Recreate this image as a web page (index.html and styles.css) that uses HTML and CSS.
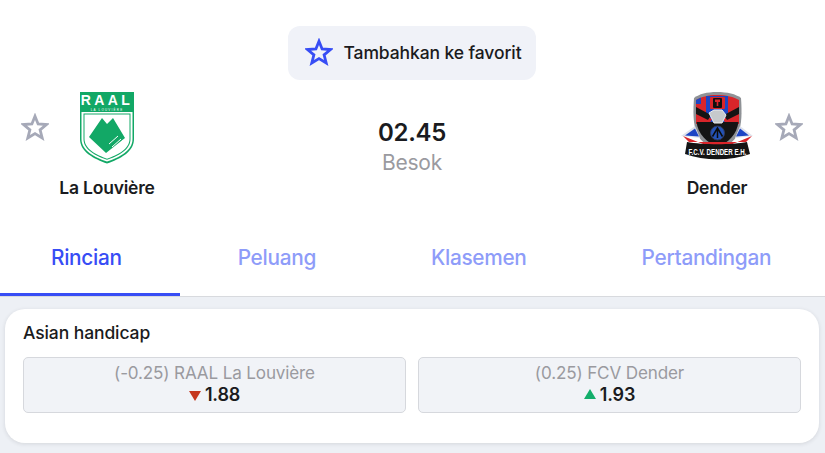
FILE: index.html
```html
<!DOCTYPE html>
<html lang="id">
<head>
<meta charset="utf-8">
<title>La Louvière - Dender</title>
<link rel="stylesheet" href="styles.css">
</head>
<body>
<svg class="defs" width="0" height="0" aria-hidden="true">
  <symbol id="star" viewBox="0 0 28 28">
    <path d="M14 3.200 17.100 10.900 25.600 11.500 19.100 16.800 21.200 25 14 20.600 6.800 25 8.900 16.800 2.400 11.500 10.900 10.900Z" fill="none" stroke="currentColor" stroke-width="2.800" stroke-linejoin="miter"/>
  </symbol>
</svg>
<header class="head">
  <button class="fav"><svg class="fav-star"><use href="#star"/></svg><span>Tambahkan ke favorit</span></button>
  <div class="match">
    <div class="team">
      <svg class="star"><use href="#star"/></svg>
      <div class="club">
        <svg class="crest" viewBox="0 0 54 72" width="54" height="72">
          <path d="M0 0H54V47C54 60 40 67 27 71.500 14 67 0 60 0 47Z" fill="#12a866"/>
          <path d="M1.500 20H52.500V47C52.500 59 39 65.500 27 69.500 15 65.500 1.500 59 1.500 47Z" fill="#fff"/>
          <path d="M3.500 21.500H50.500V47C50.500 58 38 64 27 67.800 16 64 3.500 58 3.500 47Z" fill="#12a866"/>
          <path d="M4.500 22.500H49.500V47C49.500 57 37.500 63 27 66.700 16.500 63 4.500 57 4.500 47Z" fill="#fff"/>
          <path d="M9 45 22 26 27 32 33 26 45 46 26 61Z" fill="#12a866"/>
          <path d="M29 52 38 44M32 55 41 47M35 56 43 48" stroke="#fff" stroke-width="1" fill="none"/>
          <text class="raal" x="27" y="12.800" text-anchor="middle">RAAL</text>
          <text class="raal-sub" x="27" y="18.600" text-anchor="middle">LA LOUVIÈRE</text>
        </svg>
        <span class="name">La Louvière</span>
      </div>
    </div>
    <div class="time">
      <strong>02.45</strong>
      <span>Besok</span>
    </div>
    <div class="team team-away">
      <div class="club">
        <svg class="crest" viewBox="0 0 72 72" width="72" height="72">
          <path d="M36 0C46 0 55 2 60 6 61 20 61 32 57 42 53 50 45 55 37 58 28 55 20 50 16 42 12 32 12 20 13 6 18 2 26 0 36 0Z" fill="#8f9296"/>
          <path d="M36 3C45 3 53 5 58 8V26H15V8C20 5 27 3 36 3Z" fill="#d9252a"/>
          <path d="M25 4H47V32H25Z" fill="#1d45c4"/>
          <path d="M15 8 20 5.500V12H15Z" fill="#1d45c4"/>
          <path d="M15 19 31 27 28 32H15ZM58 19 42 27 45 32H58Z" fill="#d9252a"/>
          <path d="M15 15 30 23 27 28 15 22ZM58 15 43 23 46 28 58 22Z" fill="#141414"/>
          <path d="M15.500 30H57.500C56 42 47 51 37 55 26 51 17 42 15.500 30Z" fill="#141414"/>
          <path d="M28 21 33 18H41L45 23 41 31H33Z" fill="#c6c9cc" stroke="#eceef0"/>
          <circle cx="36.500" cy="41" r="7" fill="#2453b8" stroke="#30395c"/>
          <path d="M31.500 44.500 36.500 36 41.500 44.500M36.500 37V46" stroke="#0b0b0b" stroke-width="1.500" fill="none"/>
          <rect x="29" y="5" width="15" height="12" rx="1" fill="#d9252a"/>
          <rect x="32" y="6" width="9" height="10" rx="1" fill="#111"/>
          <path d="M34 7.500H39V10H37.300V14H35.700V10H34Z" fill="#d9252a"/>
          <path d="M14 34 0 44 19 46Z" fill="#dfe3ec"/>
          <path d="M14 36.500 4 43.500 18 44.500Z" fill="#1d45c4"/>
          <path d="M59 34 72 44 54 46Z" fill="#dfe3ec"/>
          <path d="M59 36.500 68 43.500 55 44.500Z" fill="#1d45c4"/>
          <path d="M2 44 37 58 71 44 65 50H8Z" fill="#d9252a"/>
          <path d="M6 50C22 53 51 53 66 50L69 62C50 69 23 69 4 62Z" fill="#141414"/>
          <text class="fcv" x="36.500" y="62.500" text-anchor="middle" textLength="58" lengthAdjust="spacingAndGlyphs">F.C.V. DENDER E.H.</text>
        </svg>
        <span class="name">Dender</span>
      </div>
      <svg class="star"><use href="#star"/></svg>
    </div>
  </div>
</header>
<nav class="tabs">
  <a class="tab tab-first active">Rincian</a>
  <a class="tab">Peluang</a>
  <a class="tab">Klasemen</a>
  <a class="tab tab-last">Pertandingan</a>
</nav>
<main class="content">
  <section class="card">
    <h2>Asian handicap</h2>
    <div class="odds">
      <div class="odd">
        <span class="label">(-0.25) RAAL La Louvière</span>
        <span class="value"><i class="tri tri-down"></i>1.88</span>
      </div>
      <div class="odd">
        <span class="label">(0.25) FCV Dender</span>
        <span class="value"><i class="tri tri-up"></i>1.93</span>
      </div>
    </div>
  </section>
</main>
</body>
</html>
```
FILE: styles.css
```css
* { box-sizing: border-box; }
html, body { margin: 0; height: 100%; }
body {
  width: 825px;
  height: 453px;
  overflow: hidden;
  display: flex;
  flex-direction: column;
  background: #fff;
  color: #1a1b20;
  font-family: Inter, "Liberation Sans", sans-serif;
}
.defs { position: absolute; }
.head {
  height: 220px;
  padding-top: 26px;
  display: flex;
  flex-direction: column;
  align-items: center;
}
.fav {
  width: 248px;
  height: 54px;
  margin-right: 2px;
  padding: 0 0 2px 17px;
  display: flex;
  align-items: center;
  gap: 11px;
  border: 0;
  border-radius: 12px;
  background: #f0f2f8;
  color: #1a1b20;
  font: 500 17.500px Inter, sans-serif;
  letter-spacing: -0.1px;
  white-space: nowrap;
}
.fav-star { width: 28px; height: 28px; color: #374df5; flex: none; }
.match {
  width: 100%;
  display: flex;
  justify-content: space-between;
  padding: 12px 22px 0 21px;
}
.team { display: flex; align-items: flex-start; width: 160px; }
.team-away { justify-content: flex-end; }
.star { width: 28px; height: 28px; margin-top: 21px; color: #a6a9b8; flex: none; }
.club {
  width: 100px;
  margin-left: 8px;
  display: flex;
  flex-direction: column;
  align-items: center;
}
.team-away .club { margin: 0 8px 0 0; }
.crest { display: block; height: 72px; flex: none; overflow: visible; }
.name {
  margin-top: 14px;
  font-size: 17.500px;
  line-height: 20px;
  font-weight: 600;
  letter-spacing: -0.2px;
  white-space: nowrap;
}
.raal { font: 700 14px "Liberation Sans", sans-serif; letter-spacing: 3.400px; fill: #fff; }
.raal-sub { font: 400 3px "Liberation Sans", sans-serif; letter-spacing: 1.200px; fill: #fff; }
.fcv { font: 800 9px "Liberation Sans", sans-serif; fill: #fff; }
.time {
  margin-top: 26px;
  display: flex;
  flex-direction: column;
  align-items: center;
}
.time strong { font-size: 24px; line-height: 30px; font-weight: 600; letter-spacing: -0.3px; }
.time span { font-size: 21px; line-height: 26px; color: #9a9a9f; letter-spacing: -0.2px; margin-top: 2px; }
.tabs {
  height: 77px;
  display: flex;
  border-bottom: 1px solid #d8dade;
}
.tab {
  flex: 0 0 auto;
  height: 76px;
  padding: 0 57.500px 1px;
  display: flex;
  align-items: center;
  justify-content: center;
  font-size: 20.800px;
  font-weight: 500;
  letter-spacing: -0.3px;
  color: #8e9cf9;
  white-space: nowrap;
}
.tab-first { padding-left: 51px; padding-right: 58.500px; }
.tab-last { padding-right: 50px; }
.active { color: #374df5; border-bottom: 3px solid #374df5; padding-top: 2px; padding-bottom: 0; }
.content {
  flex: 1;
  padding: 12px 6px 0 5px;
  background: #edf0f5;
}
.card {
  height: 134px;
  padding: 13px 18px;
  border-radius: 20px;
  background: #fff;
  box-shadow: 0 1px 4px rgba(34, 34, 38, .12);
}
.card h2 { margin: 0; font-size: 17.500px; line-height: 22px; font-weight: 500; letter-spacing: -0.1px; }
.odds { margin-top: 13px; display: flex; gap: 12px; }
.odd {
  flex: 1;
  height: 56px;
  padding-top: 4px;
  display: flex;
  flex-direction: column;
  align-items: center;
  border: 1px solid #d6d8dd;
  border-radius: 5px;
  background: #f1f3f7;
}
.label { font-size: 17.100px; line-height: 22px; color: #9a9a9f; letter-spacing: -0.15px; }
.value {
  display: flex;
  align-items: center;
  gap: 4px;
  font-size: 18px;
  line-height: 22px;
  font-weight: 600;
  letter-spacing: -0.2px;
}
.tri { width: 0; height: 0; border-left: 6px solid transparent; border-right: 6px solid transparent; }
.tri-down { border-top: 10px solid #c5371f; margin-top: 2px; }
.tri-up { border-bottom: 10px solid #13ae6b; margin-top: -2px; }
```
